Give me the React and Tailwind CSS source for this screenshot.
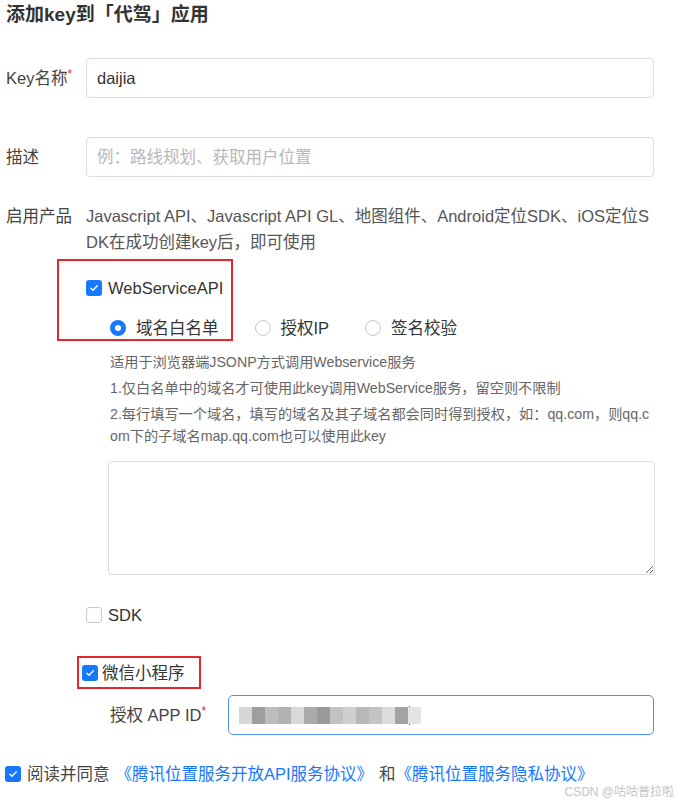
import React from 'react';

const font = { fontFamily: '"Liberation Sans", "Noto Sans CJK SC", sans-serif' };

function Check({ checked }) {
    return checked ? (
        <span className="flex h-[16px] w-[16px] shrink-0 items-center justify-center rounded-[3px] bg-[#1677ff]">
            <svg width="10" height="10" viewBox="0 0 10 10" fill="none">
                <path d="M1.8 5.2 L4 7.2 L8.3 2.8" stroke="white" strokeWidth="1.3" strokeLinecap="round" strokeLinejoin="round" />
            </svg>
        </span>
    ) : (
        <span className="h-[16px] w-[16px] shrink-0 rounded-[3px] border border-[#c8c8c8] bg-white" />
    );
}

function Radio({ checked }) {
    return checked ? (
        <span className="flex h-[16px] w-[16px] shrink-0 items-center justify-center rounded-full bg-[#1677ff]">
            <span className="h-[6px] w-[6px] rounded-full bg-white" />
        </span>
    ) : (
        <span className="h-[16px] w-[16px] shrink-0 rounded-full border border-[#c8c8c8] bg-white" />
    );
}

const blocks = ['#d6d6d6', '#9e9e9e', '#bdbdbd', '#b2b2b2', '#d9d9d9', '#ababab', '#9a9a9a', '#c2c2c2', '#cfcfcf', '#b8b8b8', '#c4c4c4', '#dcdcdc', '#a3a3a3', '#e4e4e4'];

export default function App() {
    return (
        <div className="w-[676px] h-[807px] bg-white text-[#333] relative overflow-hidden" style={font}>
            <div className="pl-[6px] pt-[2px] text-[19px] font-bold leading-[26px] text-[#333]">添加key到「代驾」应用</div>

            {/* Key名称 */}
            <div className="mt-[30px] flex items-center">
                <div className="w-[86px] pl-[6px] text-[16.5px] text-[#444]">
                    Key名称<span className="relative -top-[6px] text-[12px] text-[#f5222d]">*</span>
                </div>
                <div className="flex h-[40px] w-[568px] items-center rounded-[4px] border border-[#dcdcdc] px-[10px] text-[16.5px] text-[#333]">daijia</div>
            </div>

            {/* 描述 */}
            <div className="mt-[39px] flex items-center">
                <div className="w-[86px] pl-[6px] text-[16.5px] text-[#444]">描述</div>
                <div className="flex h-[40px] w-[568px] items-center rounded-[4px] border border-[#dcdcdc] px-[10px] text-[16.5px] text-[#b8b8b8]">例：路线规划、获取用户位置</div>
            </div>

            {/* 启用产品 */}
            <div className="mt-[26px] flex">
                <div className="w-[86px] shrink-0 pl-[6px] text-[16.5px] leading-[26px] text-[#444]">启用产品</div>
                <div className="w-[568px] break-all text-[16.5px] leading-[26px] text-[#555]">
                    Javascript API、Javascript API GL、地图组件、Android定位SDK、iOS定位SDK在成功创建key后，即可使用
                </div>
            </div>

            {/* WebServiceAPI */}
            <div className="ml-[57px] mt-[4px] h-[82px] w-[176px] border-2 border-[#e8262c] pl-[27px] pt-[17px]">
                <div className="flex items-center gap-[6px] text-[16.5px] text-[#333]">
                    <Check checked />
                    <span className="leading-[20px]">WebServiceAPI</span>
                </div>
            </div>
            <div className="-mt-[23px] ml-[110px] flex items-center gap-[36px] text-[16.5px] leading-[20px] text-[#333]">
                <div className="flex items-center gap-[10px]"><Radio checked /><span>域名白名单</span></div>
                <div className="flex items-center gap-[10px]"><Radio /><span>授权IP</span></div>
                <div className="flex items-center gap-[10px]"><Radio /><span>签名校验</span></div>
            </div>

            <div className="ml-[110px] mt-[13px] w-[546px] break-all text-[14.2px] leading-[22px] text-[#666]">
                <div className="mb-[4px]">适用于浏览器端JSONP方式调用Webservice服务</div>
                <div className="mb-[4px]">1.仅白名单中的域名才可使用此key调用WebService服务，留空则不限制</div>
                <div>2.每行填写一个域名，填写的域名及其子域名都会同时得到授权，如：qq.com，则qq.com下的子域名map.qq.com也可以使用此key</div>
            </div>

            <textarea className="ml-[108px] mt-[14px] block h-[114px] w-[547px] rounded-[4px] border border-[#dcdcdc] bg-white outline-none" />

            {/* SDK */}
            <div className="ml-[86px] mt-[30px] flex items-center gap-[6px] text-[16.5px] text-[#333]">
                <Check />
                <span className="leading-[20px]">SDK</span>
            </div>

            {/* 微信小程序 */}
            <div className="ml-[77px] mt-[31px] flex h-[33px] w-[124px] items-center gap-[4px] border-2 border-[#e8262c] pl-[3px] text-[16.5px] text-[#333]">
                <Check checked />
                <span className="leading-[20px]">微信小程序</span>
            </div>

            <div className="mt-[6px] flex items-center">
                <div className="w-[228px] pl-[110px] text-[16.5px] text-[#444]">
                    授权 APP ID<span className="relative -top-[6px] text-[12px] text-[#f5222d]">*</span>
                </div>
                <div className="flex h-[40px] w-[426px] items-center rounded-[5px] border border-[#4d8ff7] px-[10px]">
                    <div className="flex h-[17px] items-stretch blur-[0.6px]">
                        {blocks.map((c, i) => (
                            <span key={i} className="w-[13px]" style={{ backgroundColor: c }} />
                        ))}
                    </div>
                    <span className="ml-[-12px] h-[19px] w-[1px] bg-[#555]" />
                </div>
            </div>

            {/* agreement */}
            <div className="ml-[5px] mt-[29px] flex items-center gap-[6px] text-[16.5px] leading-[20px]">
                <Check checked />
                <span className="text-[#444]">阅读并同意</span>
                <span className="text-[#1677ff]">《腾讯位置服务开放API服务协议》</span>
                <span className="text-[#444]">和</span>
                <span className="-ml-[6px] text-[#1677ff]">《腾讯位置服务隐私协议》</span>
            </div>

            <div className="absolute bottom-[6px] right-[2px] text-[12px] text-[#c4c4c4]">CSDN @咕咕普拉啦</div>
        </div>
    );
}
